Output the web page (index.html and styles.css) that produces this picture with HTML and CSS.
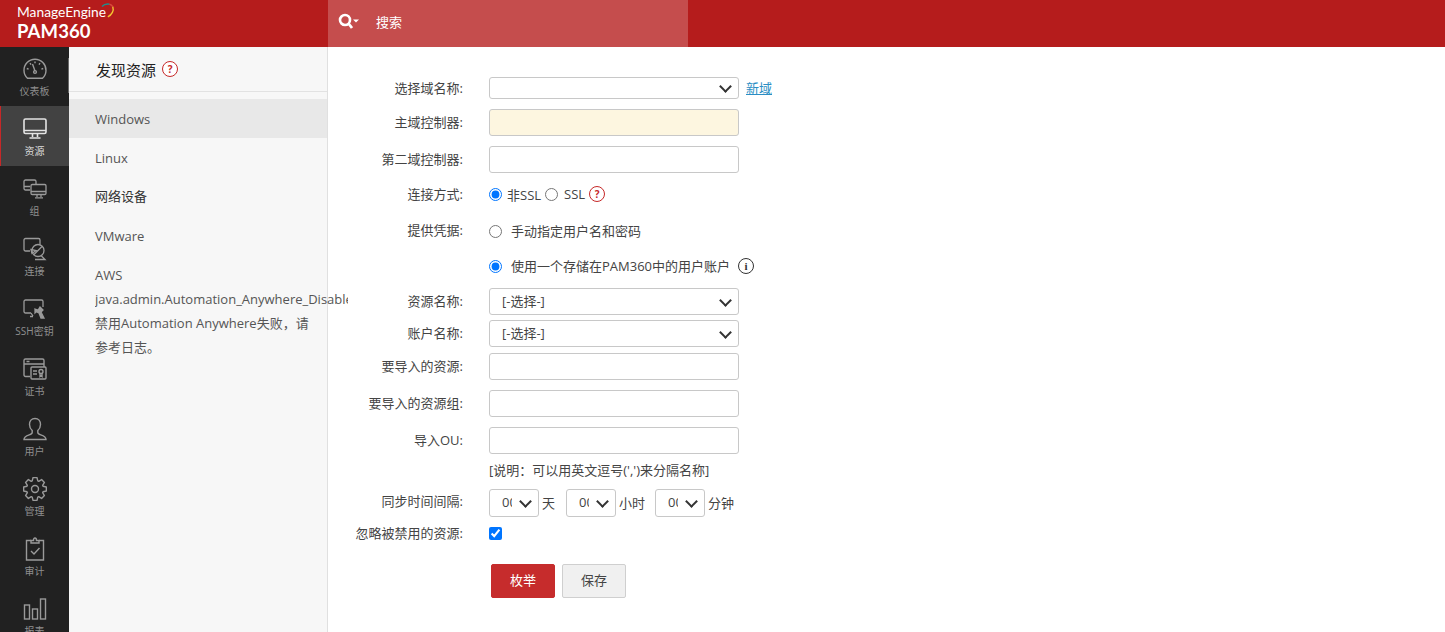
FILE: index.html
```html
<!DOCTYPE html>
<html lang="zh">
<head>
<meta charset="utf-8">
<title>PAM360</title>
<link rel="stylesheet" href="styles.css">
</head>
<body>
<header class="topbar">
  <div class="brand">
    <div class="me-line"><span class="me">ManageEngine</span><svg class="arc" width="14" height="15" viewBox="0 0 14 15" fill="none" stroke-width="1.400"><path d="M1 3.500C3 1.300 6 .8 8.500 1.200" stroke="#1e8f8f"/><path d="M8.500 1.200c1.500.4 2.600 1.300 3.300 2.600" stroke="#d9483b"/><path d="M11.800 3.800c1.200 3.600-.6 8-5 10" stroke="#f4c430"/></svg></div>
    <div class="product">PAM360</div>
  </div>
  <div class="search">
    <svg class="search-icon" width="21" height="17" viewBox="0 0 21 17"><circle cx="7" cy="7" r="5" fill="none" stroke="#fff" stroke-width="2.600"/><path d="M10.500 10.500 14 15" stroke="#fff" stroke-width="2.800"/><path d="M15 6.500h6l-3 3z" fill="#fff"/></svg>
    <span>搜索</span>
  </div>
</header>
<div class="main">
  <nav class="rail">
    <a class="rail-item first">
      <svg width="24" height="21" viewBox="0 0 24 21" fill="none" stroke="#9a9a9a" stroke-width="1.400"><path d="M4.500 19.800h15A11 11 0 1 0 4.500 19.800z"/><path d="M12 12.500 9.500 5.500M3.800 10l1.800.6M20.200 10l-1.800.6M7 4.600l1 1.500M17 4.600l-1 1.500M12 3v1.800"/><circle cx="12" cy="13.500" r="1.400"/></svg>
      <span>仪表板</span>
    </a>
    <a class="rail-item active">
      <svg width="24" height="22" viewBox="0 0 24 22" fill="none" stroke="#e4e4e4" stroke-width="1.600"><rect x="1" y="1" width="22" height="14.500" rx="1.500"/><path d="M1 12.500h22M9.500 16v3M14.500 16v3M6.500 20h11"/></svg>
      <span>资源</span>
    </a>
    <a class="rail-item">
      <svg width="24" height="20" viewBox="0 0 24 20" fill="none" stroke="#9a9a9a" stroke-width="1.300"><path d="M7 11H2.500A1.500 1.500 0 0 1 1 9.500v-7A1.500 1.500 0 0 1 2.500 1h9A1.500 1.500 0 0 1 13 2.500V5"/><rect x="8" y="5.500" width="15" height="10" rx="1.300"/><path d="M8 12.500h15M14 16v2M18 16v2M12 18.800h8M1 7.500h6"/></svg>
      <span>组</span>
    </a>
    <a class="rail-item">
      <svg width="24" height="23" viewBox="0 0 24 23" fill="none" stroke="#9a9a9a" stroke-width="1.300"><path d="M7 13.500H2.500A1.500 1.500 0 0 1 1 12V2.500A1.500 1.500 0 0 1 2.500 1h13A1.500 1.500 0 0 1 17 2.500V7"/><circle cx="15" cy="13" r="6"/><path d="M11 17l8-8M18 18l4 4H12M8 12l5 1-4 3z"/></svg>
      <span>连接</span>
    </a>
    <a class="rail-item">
      <svg width="24" height="20" viewBox="0 0 24 20" fill="none" stroke="#9a9a9a" stroke-width="1.300"><path d="M8 14H2.500A1.500 1.500 0 0 1 1 12.500v-10A1.500 1.500 0 0 1 2.500 1h16A1.500 1.500 0 0 1 20 2.500V8M7 17.500h3M8 14l2 3"/><path d="M17 8l3 3-2 2 3 6h-3l-2-5-2-1z" fill="#9a9a9a"/><path d="M12 10l3 1-3 3z" fill="#9a9a9a"/></svg>
      <span>SSH密钥</span>
    </a>
    <a class="rail-item">
      <svg width="24" height="22" viewBox="0 0 24 22" fill="none" stroke="#9a9a9a" stroke-width="1.400"><path d="M7 18.500H2.500A1.500 1.500 0 0 1 1 17V2.500A1.500 1.500 0 0 1 2.500 1h17A1.500 1.500 0 0 1 21 2.500V9M1 6h20M3.500 3.500h3"/><rect x="8" y="9" width="15" height="12" rx="1"/><path d="M10 13h4M10 16h4"/><circle cx="18" cy="13.500" r="2"/><path d="M17 15v3.500l1-.8 1 .8V15"/></svg>
      <span>证书</span>
    </a>
    <a class="rail-item">
      <svg width="24" height="23" viewBox="0 0 24 23" fill="none" stroke="#9a9a9a" stroke-width="1.400"><path d="M12 1c-3.500 0-5.500 2.800-5.500 6 0 2.500 1 4.500 2.700 6v2c0 1-1 1.700-3 2.300C3.500 18.200 1 19.500 1 22h22c0-2.500-2.500-3.800-5.200-4.700-2-.6-3-1.300-3-2.300v-2c1.700-1.500 2.700-3.500 2.700-6 0-3.200-2-6-5.500-6z"/></svg>
      <span>用户</span>
    </a>
    <a class="rail-item">
      <svg width="24" height="24" viewBox="0 0 24 24" fill="none" stroke="#9a9a9a" stroke-width="1.400" stroke-linejoin="round"><polygon points="9.230,3.960 10,.67 14,.67 14.770,3.960 15.730,4.360 18.600,2.580 21.420,5.400 19.640,8.270 20.040,9.230 23.330,10 23.330,14 20.040,14.770 19.640,15.730 21.420,18.600 18.600,21.420 15.730,19.640 14.770,20.040 14,23.330 10,23.330 9.230,20.040 8.270,19.640 5.400,21.420 2.580,18.600 4.360,15.730 3.960,14.770 .67,14 .67,10 3.960,9.230 4.360,8.270 2.580,5.400 5.400,2.580 8.270,4.360"/><circle cx="12" cy="12" r="3.500"/></svg>
      <span>管理</span>
    </a>
    <a class="rail-item">
      <svg width="24" height="24" viewBox="0 0 24 24" fill="none" stroke="#9a9a9a" stroke-width="1.400"><path d="M8 3.500H3.500V23h17V3.500H16"/><path d="M8 6V3.500h2.500C10.500 2 11 1 12 1s1.500 1 1.500 2.500H16V6z"/><path d="M8 14l3 3 5.500-6"/></svg>
      <span>审计</span>
    </a>
    <a class="rail-item">
      <svg width="24" height="22" viewBox="0 0 24 22" fill="none" stroke="#9a9a9a" stroke-width="1.400"><rect x="1.500" y="7" width="5" height="14"/><rect x="9.500" y="11" width="5" height="10"/><rect x="17.500" y="1" width="5" height="20"/></svg>
      <span>报表</span>
    </a>
  </nav>
  <aside class="side">
    <div class="side-head"><h2>发现资源</h2><span class="help">?</span></div>
    <ul class="side-list">
      <li class="current">Windows</li>
      <li>Linux</li>
      <li>网络设备</li>
      <li>VMware</li>
      <li>AWS</li>
    </ul>
    <div class="side-note">
      <div class="overflow">java.admin.Automation_Anywhere_Disable</div>
      <div>禁用Automation Anywhere失败，请参考日志。</div>
    </div>
  </aside>
  <section class="content">
    <form class="form">
      <div class="row h22"><label>选择域名称:</label><div class="field"><span class="select-wrap short"><select></select></span><a class="link">新域</a></div></div>
      <div class="row h27 g10"><label>主域控制器:</label><div class="field"><input class="input yellow" type="text"></div></div>
      <div class="row h27 g10"><label>第二域控制器:</label><div class="field"><input class="input" type="text"></div></div>
      <div class="row h20 g11"><label>连接方式:</label><div class="field"><input class="radio" type="radio" name="conn" checked><span class="opt-a">非SSL</span><input class="radio" type="radio" name="conn"><span class="opt-b">SSL</span><span class="help">?</span></div></div>
      <div class="row h20 g17"><label class="up">提供凭据:</label><div class="field"><input class="radio" type="radio" name="cred"><span class="opt-c">手动指定用户名和密码</span></div></div>
      <div class="row h20 g15"><label></label><div class="field"><input class="radio" type="radio" name="cred" checked><span class="opt-c">使用一个存储在PAM360中的用户账户</span><span class="info">i</span></div></div>
      <div class="row h27 g12"><label>资源名称:</label><div class="field"><span class="select-wrap"><select><option>[-选择-]</option></select></span></div></div>
      <div class="row h27 g5"><label>账户名称:</label><div class="field"><span class="select-wrap"><select><option>[-选择-]</option></select></span></div></div>
      <div class="row h27 g6"><label>要导入的资源:</label><div class="field"><input class="input" type="text"></div></div>
      <div class="row h27 g10"><label>要导入的资源组:</label><div class="field"><input class="input" type="text"></div></div>
      <div class="row h27 g10"><label>导入OU:</label><div class="field"><input class="input" type="text"></div></div>
      <div class="row h20 g7"><label></label><div class="field note">[说明：可以用英文逗号(',')来分隔名称]</div></div>
      <div class="row h28 g8"><label class="up wide">同步时间间隔:</label><div class="field">
        <span class="select-wrap mini"><select><option>00</option></select></span><span class="unit u1">天</span>
        <span class="select-wrap mini"><select><option>00</option></select></span><span class="unit u2">小时</span>
        <span class="select-wrap mini"><select><option>00</option></select></span><span class="unit">分钟</span>
      </div></div>
      <div class="row h20 g6"><label>忽略被禁用的资源:</label><div class="field"><input class="radio" type="checkbox" checked></div></div>
      <div class="actions"><button type="button" class="btn primary">枚举</button><button type="button" class="btn">保存</button></div>
    </form>
  </section>
</div>
</body>
</html>
```
FILE: styles.css
```css
* { box-sizing: border-box; }
html, body { margin: 0; height: 100%; overflow: hidden; }
body { font-family: "Open Sans", "Noto Sans CJK SC", sans-serif; font-size: 13px; color: #444; background: #fff; height: 632px; }
.topbar { height: 47px; background: #b51c1c; display: flex; }
.brand { width: 328px; padding: 3px 0 0 17px; color: #fff; }
.me-line { display: flex; align-items: flex-start; height: 16px; }
.me { font-family: "Lato", sans-serif; font-size: 13.800px; line-height: 16px; margin-top: 1px; }
.arc { margin-left: -5px; }
.product { font-family: "Lato", sans-serif; font-weight: 700; font-size: 18.500px; line-height: 22px; margin-top: 1px; letter-spacing: .1px; }
.search { width: 360px; background: #c54d4d; display: flex; align-items: center; color: #fff; padding: 0 0 4px 10px; gap: 17px; }
.search-icon { flex: none; }
.main { display: flex; height: 585px; }
.rail { width: 69px; background: #212121; overflow: hidden; flex: none; }
.rail-item { position: relative; height: 60px; display: flex; flex-direction: column; align-items: center; color: #8f8f8f; font-size: 10px; line-height: 14px; padding-top: 11px; }
.rail-item svg { height: 24px; flex: none; margin-bottom: 3px; }
.rail-item.first { height: 59px; padding-top: 10px; }
.rail-item.first::after { content: ""; position: absolute; right: 0; top: 11px; width: 1px; height: 35px; background: #6a6a6a; }
.rail-item.active { background: #424242; color: #dcdcdc; border-left: 1px solid #c62828; padding-right: 1px; }
.side { width: 259px; flex: none; background: #f7f7f7; border-right: 1px solid #e0e0e0; }
.side-head { height: 45px; border-bottom: 1px solid #e2e2e2; display: flex; align-items: center; padding-left: 27px; gap: 6px; margin-bottom: 7px; }
.side-head h2 { margin: 0; font-weight: 400; font-size: 15px; color: #222; }
.help { width: 16px; height: 16px; border: 1.500px solid #c62828; border-radius: 50%; color: #c62828; font-size: 10px; font-weight: 700; display: flex; align-items: center; justify-content: center; line-height: 1; background: #fff; flex: none; }
.side-list { list-style: none; margin: 0; padding: 0; }
.side-list li { height: 39px; line-height: 39px; padding: 1px 0 0 26px; color: #555; }
.side-list li.current { background: #e8e8e8; }
.side-list li:nth-child(3) { color: #333; padding-top: 0; }
.side-note { padding: 0 16px 0 26px; line-height: 24px; color: #555; margin-top: -7px; }
.overflow { white-space: nowrap; width: 253px; overflow: hidden; }
.content { flex: 1; padding-top: 30px; }
.row { display: flex; align-items: center; }
label { width: 135px; text-align: right; flex: none; color: #444; margin-right: 26px; padding-bottom: 2px; }
label.up { align-self: flex-start; line-height: 18px; padding-bottom: 0; }
label.wide { line-height: 24px; }
.h22 { height: 22px; } .h27 { height: 27px; } .h20 { height: 20px; } .h28 { height: 28px; }
.g5 { margin-top: 5px; } .g6 { margin-top: 6px; } .g7 { margin-top: 7px; } .g8 { margin-top: 8px; } .g10 { margin-top: 10px; } .g11 { margin-top: 11px; } .g12 { margin-top: 12px; } .g15 { margin-top: 15px; } .g17 { margin-top: 17px; }
.field { display: flex; align-items: center; height: 100%; }
.note { padding-bottom: 4px; }
.input { width: 250px; height: 100%; border: 1px solid #c8c8c8; border-radius: 3px; background: #fff; padding: 0 8px; font: inherit; outline: none; }
.yellow { background: #fdf6e0; }
.select-wrap { position: relative; width: 250px; height: 100%; display: block; flex: none; }
.select-wrap select { appearance: none; width: 100%; height: 100%; border: 1px solid #c8c8c8; border-radius: 3px; background: #fff; font: inherit; color: #444; padding: 0 26px 2px 12px; outline: none; }
.select-wrap::after { content: ""; position: absolute; right: 9px; top: 50%; width: 7px; height: 7px; margin-top: -6px; border-right: 2px solid #333; border-bottom: 2px solid #333; transform: rotate(45deg); pointer-events: none; }
.select-wrap.mini { width: 50px; }
.unit { margin-left: 3px; padding-bottom: 2px; }
.u1 { width: 24px; } .u2 { width: 36px; }
.link { color: #2a8ec4; text-decoration: underline; margin-left: 7px; padding-bottom: 2px; }
.radio { width: 13px; height: 13px; margin: 0; flex: none; }
.opt-a { margin: 0 4px 0 5px; }
.opt-b { margin: 0 4px 0 6px; }
.opt-c { margin-left: 9px; padding-bottom: 2px; }
.info { width: 16px; height: 16px; border: 1.300px solid #333; border-radius: 50%; margin-left: 8px; display: flex; align-items: center; justify-content: center; font-family: "Liberation Serif", serif; font-weight: 700; font-size: 11px; color: #333; flex: none; }
.actions { display: flex; gap: 7px; margin: 21px 0 0 163px; }
.btn { width: 64px; height: 34px; border: 1px solid #cfcfcf; border-radius: 2px; background: #f0f0f0; font: inherit; color: #444; padding: 0 0 3px; }
.btn.primary { background: #c62c2c; border-color: #c62c2c; color: #fff; }
```
